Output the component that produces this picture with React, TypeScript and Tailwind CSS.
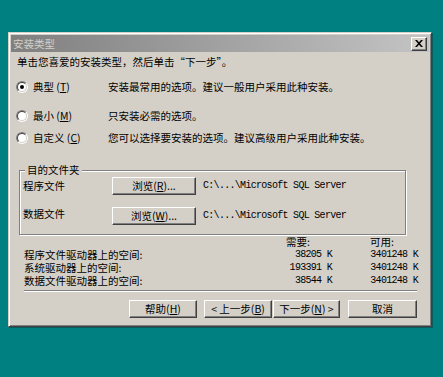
import type { ReactNode } from 'react';

const cjk = "font-['Noto_Sans_CJK_SC',sans-serif]";
const mono = "font-['Liberation_Mono',monospace] text-[10px] tracking-[-0.7px]";

function Radio({ checked }: { checked?: boolean }) {
  return (
    <span className="flex w-[12px] h-[12px] shrink-0 rounded-full border border-t-[#808080] border-l-[#808080] border-b-white border-r-white">
      <span className="flex w-full h-full items-center justify-center rounded-full border border-t-[#404040] border-l-[#404040] border-b-[#d4d0c8] border-r-[#d4d0c8] bg-white">
        {checked && <span className="w-[4px] h-[4px] rounded-full bg-black" />}
      </span>
    </span>
  );
}

function Btn({ className, children }: { className: string; children: ReactNode }) {
  return (
    <button
      type="button"
      className={`flex items-center justify-center h-[18px] shrink-0 bg-[#d4d0c8] border border-t-white border-l-white border-r-[#404040] border-b-[#404040] shadow-[inset_-1px_-1px_0_#808080] text-[10.5px] leading-[12px] text-black ${className}`}
    >
      {children}
    </button>
  );
}

function Option({ checked, label, keyChar, desc, rowClass }: { checked?: boolean; label: string; keyChar: string; desc: string; rowClass: string }) {
  return (
    <div className={`flex items-center ${rowClass}`}>
      <div className="flex items-center w-[92px]">
        <Radio checked={checked} />
        <span className="ml-[5px]">
          {label} (<u>{keyChar}</u>)
        </span>
      </div>
      <span>{desc}</span>
    </div>
  );
}

export default function App() {
  return (
    <div className={`w-[443px] h-[377px] bg-[#008080] overflow-hidden pt-[32px] ${cjk} text-[10.5px] leading-[12px] text-black`}>
      <div className="ml-[8px] w-[424px] h-[295px] bg-[#d4d0c8] border border-t-[#d4d0c8] border-l-[#d4d0c8] border-r-[#404040] border-b-[#404040] shadow-[inset_1px_1px_0_#fff,inset_-1px_-1px_0_#808080,1px_1px_0_#0b5c5c] p-[2px] flex flex-col">
        {/* Title bar */}
        <div className="flex items-center justify-between h-[17px] px-[2px] bg-linear-to-r from-[#808080] to-[#c4c4c4]">
          <span className="text-[#d4d0c8]">安装类型</span>
          <span className="flex items-center justify-center w-[16px] h-[14px] bg-[#d4d0c8] border border-t-white border-l-white border-r-[#404040] border-b-[#404040] shadow-[inset_-1px_-1px_0_#808080]">
            <svg width="8" height="7" viewBox="0 0 8 7">
              <path d="M0 0h2l2 2.2L6 0h2L5 3.5 8 7H6L4 4.8 2 7H0l3-3.5z" fill="#000" />
            </svg>
          </span>
        </div>

        {/* Content */}
        <div className="flex flex-col pl-[5px]">
          <div className="flex items-center h-[20px] pl-[1px]">单击您喜爱的安装类型，然后单击“下一步”。</div>
          <Option checked label="典型" keyChar="T" desc="安装最常用的选项。建议一般用户采用此种安装。" rowClass="h-[30px]" />
          <Option label="最小" keyChar="M" desc="只安装必需的选项。" rowClass="h-[28px]" />
          <Option label="自定义" keyChar="C" desc="您可以选择要安装的选项。建议高级用户采用此种安装。" rowClass="h-[16px]" />

          {/* Destination folder */}
          <fieldset className="mt-[17px] ml-[3px] w-[387px] border border-[#808080] shadow-[1px_1px_0_#fff,inset_1px_1px_0_#fff] pb-[9px] pl-[3px]">
            <legend className="ml-[2px] px-[2px] h-[14px] leading-[14px] bg-[#d4d0c8]">目的文件夹</legend>
            <div className="flex flex-col gap-[12px]">
              <div className="flex items-center h-[18px]">
                <span className="w-[89px]">程序文件</span>
                <Btn className="w-[84px]">
                  浏览(<u>R</u>)...
                </Btn>
                <span className={`ml-[7px] ${mono}`}>{'C:\\...\\Microsoft SQL Server'}</span>
              </div>
              <div className="flex items-center h-[18px]">
                <span className="w-[89px] -mt-[4px]">数据文件</span>
                <Btn className="w-[84px]">
                  浏览(<u>W</u>)...
                </Btn>
                <span className={`ml-[7px] ${mono}`}>{'C:\\...\\Microsoft SQL Server'}</span>
              </div>
            </div>
          </fieldset>

          {/* Disk space */}
          <div className="flex flex-col pl-[8px]">
            <div className="flex items-center h-[13px]">
              <span className="w-[250px]" />
              <span className="w-[58px] pl-[12px]">需要:</span>
              <span className="w-[86px] pl-[38px]">可用:</span>
            </div>
            {[
              ['程序文件驱动器上的空间:', '38205 K', '3401248 K'],
              ['系统驱动器上的空间:', '193391 K', '3401248 K'],
              ['数据文件驱动器上的空间:', '38544 K', '3401248 K'],
            ].map(([label, need, avail]) => (
              <div key={label} className="flex items-center h-[13px]">
                <span className="w-[250px] leading-[11px]">{label}</span>
                <span className={`w-[58px] text-right leading-[11px] ${mono}`}>{need}</span>
                <span className={`w-[86px] text-right leading-[11px] ${mono}`}>{avail}</span>
              </div>
            ))}
          </div>

          <div className="mt-[3px] ml-[8px] w-[393px] border-t border-t-[#808080] border-b border-b-white" />

          {/* Buttons */}
          <div className="flex mt-[8px] ml-[113px]">
            <Btn className="w-[68px]">
              帮助(<u>H</u>)
            </Btn>
            <Btn className="w-[68px] ml-[7px]">
              &lt; 上一步(<u>B</u>)
            </Btn>
            <Btn className="w-[67px] ml-[1px]">
              下一步(<u>N</u>) &gt;
            </Btn>
            <Btn className="w-[69px] ml-[8px]">取消</Btn>
          </div>
        </div>
      </div>
    </div>
  );
}
